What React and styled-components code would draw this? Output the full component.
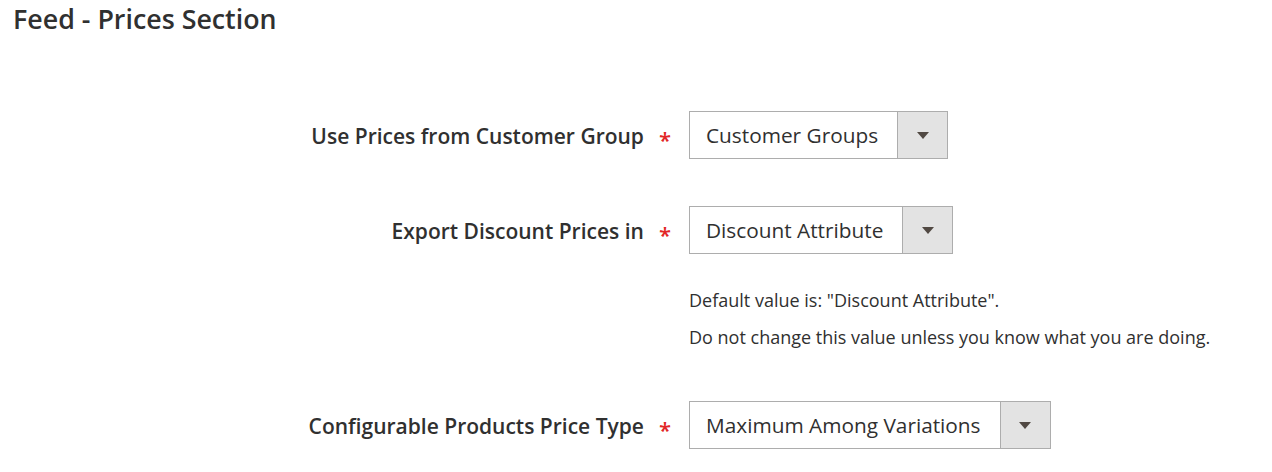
import React from "react";
import styled, { createGlobalStyle } from "styled-components";

const Global = createGlobalStyle`
  html, body { margin: 0; padding: 0; background: #ffffff; }
  body { font-family: "Open Sans", "Noto Sans", sans-serif; color: #303030; }
`;

const Page = styled.div`
  width: 1272px;
  height: 472px;
  overflow: hidden;
  box-sizing: border-box;
  padding: 2px 0 0 13px;
`;

const Title = styled.h1`
  margin: 0;
  font-size: 26.8px;
  line-height: 34px;
  font-weight: 600;
  color: #303030;
`;

const Form = styled.div`
  display: flex;
  flex-direction: column;
  padding-top: 75px;
`;

const Row = styled.div`
  display: grid;
  grid-template-columns: 676px auto;
  align-items: start;
  margin-bottom: 47px;
`;

const Label = styled.label`
  display: flex;
  justify-content: flex-end;
  align-items: center;
  gap: 15px;
  height: 48px;
  padding: 1px 18px 0 0;
  box-sizing: border-box;
  font-size: 21px;
  font-weight: 600;
  color: #303030;
  white-space: nowrap;
`;

const Required = styled.span`
  color: #e22626;
  font-size: 22px;
  font-weight: 600;
  line-height: 1;
  padding-top: 6px;
`;

const Control = styled.div`
  display: flex;
  flex-direction: column;
  align-items: flex-start;
`;

const Select = styled.div`
  display: inline-flex;
  align-items: stretch;
  height: 48px;
  box-sizing: border-box;
  border: 1px solid #adadad;
  background: #ffffff;
`;

const Value = styled.span`
  display: flex;
  align-items: center;
  padding: 0 19px 0 16px;
  font-size: 20.8px;
  color: #303030;
  white-space: nowrap;
`;

const Arrow = styled.span`
  width: 49px;
  display: flex;
  align-items: center;
  justify-content: center;
  background: #e3e3e3;
  border-left: 1px solid #adadad;
  &::after {
    content: "";
    width: 0;
    height: 0;
    border-left: 6px solid transparent;
    border-right: 6px solid transparent;
    border-top: 7px solid #514943;
  }
`;

const Notes = styled.div`
  display: flex;
  flex-direction: column;
  gap: 13px;
  margin-top: 34px;
  padding-bottom: 5px;
`;

const Note = styled.p`
  margin: 0;
  font-size: 18px;
  line-height: 24px;
  color: #303030;
`;

const Field = ({ label, value, notes }) => (
  <Row>
    <Label>
      {label}
      <Required>*</Required>
    </Label>
    <Control>
      <Select>
        <Value>{value}</Value>
        <Arrow />
      </Select>
      {notes && (
        <Notes>
          {notes.map((n) => (
            <Note key={n}>{n}</Note>
          ))}
        </Notes>
      )}
    </Control>
  </Row>
);

export default function App() {
  return (
    <Page>
      <Global />
      <Title>Feed - Prices Section</Title>
      <Form>
        <Field label="Use Prices from Customer Group" value="Customer Groups" />
        <Field
          label="Export Discount Prices in"
          value="Discount Attribute"
          notes={[
            'Default value is: "Discount Attribute".',
            "Do not change this value unless you know what you are doing.",
          ]}
        />
        <Field label="Configurable Products Price Type" value="Maximum Among Variations" />
      </Form>
    </Page>
  );
}
